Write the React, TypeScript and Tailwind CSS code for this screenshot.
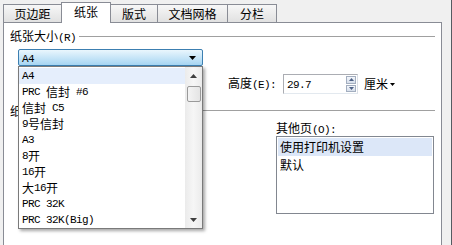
import React from "react";

const LAT = "font-['Liberation_Mono','Noto_Sans_CJK_SC',monospace] text-[11px] tracking-[-0.6px]";

// SimSun-like mix: half-width latin runs in a mono face, CJK in Noto
function Txt({ s }: { s: string }) {
  const parts = s.match(/[\x00-\xff]+|[^\x00-\xff]+/g) || [];
  return (
    <>
      {parts.map((p, i) =>
        /[\x00-\xff]/.test(p[0]) ? (
          <span key={i} className={LAT}>{p}</span>
        ) : (
          <span key={i}>{p}</span>
        )
      )}
    </>
  );
}

const tabs = [
  { label: "页边距", w: "w-[59px]" },
  { label: "纸张", w: "w-[50px]", active: true },
  { label: "版式", w: "w-[48px]" },
  { label: "文档网格", w: "w-[71px]" },
  { label: "分栏", w: "w-[50px]" },
];

const sizes = ["A4", "PRC 信封 #6", "信封 C5", "9号信封", "A3", "8开", "16开", "大16开", "PRC 32K", "PRC 32K(Big)"];

function Arrow({ up, className }: { up?: boolean; className?: string }) {
  return (
    <svg width="7" height="4" viewBox="0 0 7 4" className={className}>
      {up ? <path d="M0 4h7L3.5 0z" fill="currentColor" /> : <path d="M0 0h7L3.5 4z" fill="currentColor" />}
    </svg>
  );
}

function Spin({ value }: { value: string }) {
  return (
    <div className="w-[75px] h-[20px] border border-[#abadb3] border-r-[#dbdfe6] border-b-[#e3e9ef] bg-white flex items-center">
      <span className="flex-1 pl-[3px] whitespace-pre leading-none"><Txt s={value} /></span>
      <div className="w-[10px] h-full flex flex-col gap-px py-px mr-px">
        <div className="flex-1 border border-[#a3aebf] bg-linear-to-b from-[#f3f6fb] to-[#d6deea] flex items-center justify-center text-[#4d6185]">
          <svg width="5" height="3" viewBox="0 0 5 3"><path d="M0 3h5L2.5 0z" fill="currentColor" /></svg>
        </div>
        <div className="flex-1 border border-[#a3aebf] bg-linear-to-b from-[#f3f6fb] to-[#d6deea] flex items-center justify-center text-[#4d6185]">
          <svg width="5" height="3" viewBox="0 0 5 3"><path d="M0 0h5L2.5 3z" fill="currentColor" /></svg>
        </div>
      </div>
    </div>
  );
}

function GroupHeader({ label }: { label: string }) {
  return (
    <div className="h-[17px] flex items-center pl-[6px] pr-[6px]">
      <span className="whitespace-pre leading-none"><Txt s={label} /></span>
      <div className="flex-1 h-px bg-[#a0a0a0] ml-[3px]" />
    </div>
  );
}

export default function App() {
  return (
    <div className="w-[452px] h-[245px] bg-[#f0f0f0] border-r border-[#555a61] relative overflow-hidden text-[12px] text-black font-['Noto_Sans_CJK_SC',sans-serif]">
      {/* tab strip */}
      <div className="flex items-end h-[22px] pl-[3px]">
        {tabs.map((t, i) =>
          t.active ? (
            <div
              key={t.label}
              className={`${t.w} h-[21px] -mb-px -ml-px relative z-10 bg-white border border-b-0 border-[#898c95] flex items-center justify-center leading-none pb-[2px]`}
            >
              {t.label}
            </div>
          ) : (
            <div
              key={t.label}
              className={`${t.w} h-[18px] ${i === 0 ? "" : "-ml-px"} border border-b-0 border-[#898c95] bg-linear-to-b from-[#f7f7f7] to-[#e1e1e1] flex items-center justify-center leading-none`}
            >
              {t.label}
            </div>
          )
        )}
      </div>

      {/* page panel */}
      <div className="ml-[3px] w-[439px] h-[223px] bg-white border border-b-0 border-[#898c95] flex flex-col">
        <div className="mt-[5px]">
          <GroupHeader label="纸张大小(R)" />
        </div>

        <div className="ml-[14px] mt-[4px] w-[185px] h-[17px] border border-[#3c7fb1] rounded-[2px] bg-linear-to-b from-[#eaf6fd] to-[#a6d5f2] flex items-center justify-between pl-[3px] pr-[6px]">
          <span className="leading-none"><Txt s="A4" /></span>
          <Arrow className="text-black" />
        </div>

        <div className="ml-[14px] mt-[8px] h-[20px] flex items-center">
          {/* width field sits under the open list */}
          <div className="w-[210px]" />
          <span className="w-[55px] whitespace-pre leading-none"><Txt s="高度(E):" /></span>
          <Spin value="29.7" />
          <span className="ml-[6px] leading-none flex items-center gap-[2px]">
            厘米
            <svg width="5" height="3" viewBox="0 0 5 3"><path d="M0 0h5L2.5 3z" fill="currentColor" /></svg>
          </span>
        </div>

        <div className="mt-[8px]">
          <GroupHeader label="纸" />
        </div>

        <div className="ml-[14px] mt-[2px] flex">
          <div className="w-[258px]" />
          <div className="flex flex-col">
            <span className="h-[14px] leading-[14px] whitespace-pre"><Txt s="其他页(O):" /></span>
            <div className="mt-px w-[158px] h-[78px] border border-[#828790] p-px">
              <div className="h-[18px] flex items-center pl-[2px] bg-[#dce7f8]">使用打印机设置</div>
              <div className="h-[18px] flex items-center pl-[2px]">默认</div>
            </div>
          </div>
        </div>
      </div>

      {/* open dropdown list of the paper size combo */}
      <div className="absolute left-[18px] top-[66px] w-[185px] h-[163px] z-20 bg-white border border-[#7a7a7a] flex shadow-[2px_2px_3px_rgba(0,0,0,0.35)]">
        <div className="flex-1 pt-px flex flex-col">
          {sizes.map((s, i) => (
            <div
              key={s}
              className={`h-[16px] flex items-center pl-[3px] whitespace-pre leading-none ${i === 0 ? "bg-[#e5eefc]" : ""}`}
            >
              <Txt s={s} />
            </div>
          ))}
        </div>
        <div className="w-[17px] bg-linear-to-r from-[#ebebeb] via-[#f6f6f6] to-[#ebebeb] flex flex-col items-center">
          <div className="h-[17px] w-full flex items-center justify-center text-[#3f3f3f]">
            <Arrow up />
          </div>
          <div className="mt-[2px] w-[14px] h-[16px] rounded-[2px] border border-[#9a9a9a] bg-linear-to-r from-[#f4f4f4] to-[#e4e4e4]" />
          <div className="flex-1" />
          <div className="h-[17px] w-full flex items-center justify-center text-[#3f3f3f]">
            <Arrow />
          </div>
        </div>
      </div>
    </div>
  );
}
